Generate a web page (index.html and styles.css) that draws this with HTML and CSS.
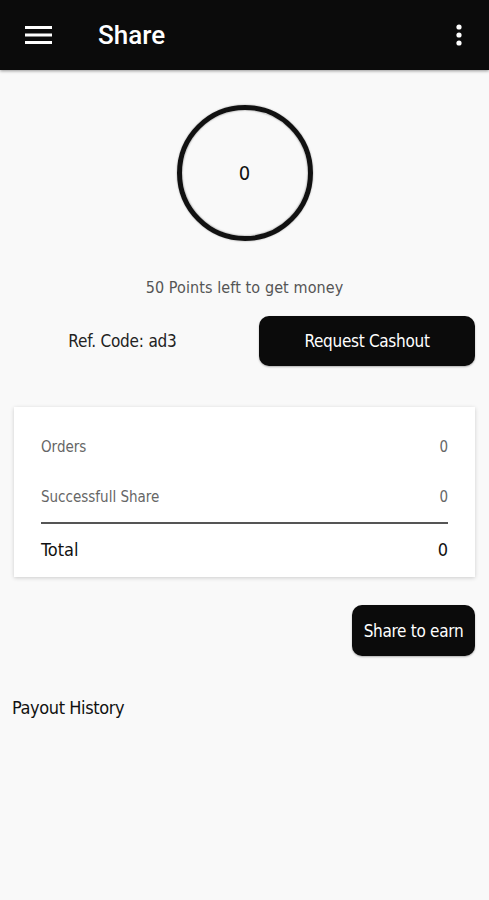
FILE: index.html
```html
<!DOCTYPE html>
<html lang="en">
<head>
	<meta charset="UTF-8">
	<title>Share</title>
	<link rel="stylesheet" href="styles.css">
</head>
<body>
	<div class="topbar">
		<svg class="menu" width="28" height="20" viewBox="0 0 28 20">
			<rect x="0" y="1" width="27" height="3" fill="#fff"/>
			<rect x="0" y="8.5" width="27" height="3" fill="#fff"/>
			<rect x="0" y="16" width="27" height="3" fill="#fff"/>
		</svg>
		<span class="title">Share</span>
		<svg class="more" width="8" height="22" viewBox="0 0 8 22">
			<circle cx="4" cy="3" r="2.6" fill="#fff"/>
			<circle cx="4" cy="11" r="2.6" fill="#fff"/>
			<circle cx="4" cy="19" r="2.6" fill="#fff"/>
		</svg>
	</div>

	<div class="points">
		<div class="ring">0</div>
		<p class="left">50 Points left to get money</p>
	</div>

	<div class="refrow">
		<span class="ref">Ref. Code: ad3</span>
		<a href="javascript:;" class="btn cashout">Request Cashout</a>
	</div>

	<div class="card">
		<div class="line"><span>Orders</span><span>0</span></div>
		<div class="line last"><span>Successfull Share</span><span>0</span></div>
		<div class="line total"><span>Total</span><span>0</span></div>
	</div>

	<div class="sharerow">
		<a href="javascript:;" class="btn share">Share to earn</a>
	</div>

	<h3 class="history">Payout History</h3>
</body>
</html>
```

FILE: styles.css
```css
body,div,p,h3,span,a{margin:0;padding:0;border:0;}
body{background:#f9f9f9;font-family:"DejaVu Sans Condensed",Roboto,"Liberation Sans",sans-serif;color:#111;}
.topbar{height:70px;background:#0b0b0b;display:flex;align-items:center;padding:0 26px 0 25px;box-shadow:0 1px 3px rgba(0,0,0,.4);}
.menu{display:block;}
.title{font-family:Roboto,sans-serif;font-weight:500;font-size:26px;color:#fff;margin-left:45px;flex:1;}
.more{display:block;}
.points{display:flex;flex-direction:column;align-items:center;padding-top:35px;}
.ring{width:126px;height:126px;border:5px solid #111;border-radius:50%;display:flex;align-items:center;justify-content:center;font-size:20px;box-shadow:inset 0 0 2px rgba(0,0,0,.5),0 0 2px rgba(0,0,0,.4);}
.left{margin-top:37px;font-size:16px;color:#555;letter-spacing:.1px;}
.refrow{display:flex;align-items:center;padding-right:14px;margin-top:19px;}
.ref{flex:1;text-align:center;font-size:17px;color:#222;letter-spacing:-.2px;}
.btn{background:#0b0b0b;color:#fff;text-decoration:none;border-radius:10px;display:flex;align-items:center;justify-content:center;font-size:17px;letter-spacing:-.3px;box-shadow:0 1px 2px rgba(0,0,0,.3);}
.cashout{width:216px;height:50px;margin-left:14px;}
.card{margin:41px 14px 0;background:#fff;padding:15px 27px 2px;box-shadow:0 1px 4px rgba(0,0,0,.18);}
.line{display:flex;justify-content:space-between;align-items:center;height:50px;font-size:15px;color:#666;}
.line.last{border-bottom:2px solid #555;}
.line.total{height:51px;font-size:18px;color:#111;}
.sharerow{display:flex;justify-content:flex-end;padding-right:14px;margin-top:28px;}
.share{width:123px;height:51px;}
.history{font-weight:normal;font-size:18px;letter-spacing:-.4px;margin:41px 0 0 12px;color:#111;}
```
